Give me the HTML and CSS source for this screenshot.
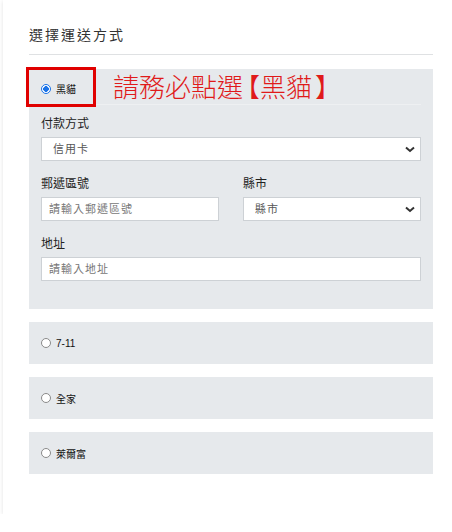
FILE: index.html
```html
<!DOCTYPE html>
<html lang="zh-TW">
<head>
    <meta charset="UTF-8">
    <meta name="viewport" content="width=device-width, initial-scale=1.0">
    <title>選擇運送方式</title>
    <link rel="stylesheet" href="styles.css">
</head>
<body>

    <div class="card">
        <h2 class="title">選擇運送方式</h2>
        <div class="divider"></div>

        <div class="shipping open">
            <div class="shipping-head">
                <label class="option">
                    <input type="radio" name="ship" checked>
                    <span>黑貓</span>
                </label>
                <span class="mark-box"></span>
                <span class="notice">請務必點選<span class="bracket open-b">【</span>黑貓<span class="bracket close-b">】</span></span>
            </div>

            <div class="field">
                <label>付款方式</label>
                <select>
                    <option>信用卡</option>
                </select>
            </div>

            <div class="field-row">
                <div class="field">
                    <label>郵遞區號</label>
                    <input type="text" placeholder="請輸入郵遞區號">
                </div>
                <div class="field">
                    <label>縣市</label>
                    <select>
                        <option>縣市</option>
                    </select>
                </div>
            </div>

            <div class="field">
                <label>地址</label>
                <input type="text" placeholder="請輸入地址">
            </div>
        </div>

        <div class="shipping">
            <label class="option">
                <input type="radio" name="ship">
                <span>7-11</span>
            </label>
        </div>

        <div class="shipping">
            <label class="option">
                <input type="radio" name="ship">
                <span>全家</span>
            </label>
        </div>

        <div class="shipping">
            <label class="option">
                <input type="radio" name="ship">
                <span>萊爾富</span>
            </label>
        </div>
    </div>

</body>
</html>
```

FILE: styles.css
```css
body {
    margin: 0;
    background: #fff;
    font-family: "Liberation Sans", "Noto Sans CJK TC", sans-serif;
    color: #222;
    overflow: hidden;
}
.card {
    margin-left: 3px;
    width: 404px;
    padding: 20px 19px 40px 26px;
    background: #fff;
    box-shadow: 0 1px 4px rgba(0, 0, 0, 0.12);
}
.title {
    margin: 0;
    font-size: 14px;
    font-weight: normal;
    letter-spacing: 2px;
    line-height: 30px;
    color: #333;
    height: 34px;
}
.divider {
    border-top: 1px solid #dfe1e3;
    margin-bottom: 14px;
}
.shipping {
    background: #e6e9ec;
    height: 42px;
    padding: 0 12px;
    margin-bottom: 13px;
    display: flex;
    align-items: center;
}
.shipping:last-child {
    margin-bottom: 0;
}
.shipping.open {
    height: auto;
    display: block;
    padding-bottom: 28px;
    margin-bottom: 13px;
}
.shipping-head {
    position: relative;
    height: 36px;
    display: flex;
    align-items: center;
    border-bottom: 1px solid #eef0f2;
    padding-top: 4px;
    box-sizing: border-box;
}
.option {
    display: flex;
    align-items: center;
    gap: 5px;
    font-size: 10px;
    color: #111;
}
.option input {
    appearance: none;
    width: 10px;
    height: 10px;
    margin: 0;
    border: 1px solid #8a8a8a;
    border-radius: 50%;
    background: #fff;
    box-sizing: border-box;
}
.option input:checked {
    border: 1px solid #1a73e8;
    background: radial-gradient(circle, #1a73e8 0 2.6px, #fff 3px);
}
.mark-box {
    position: absolute;
    left: -15px;
    top: -2px;
    width: 70px;
    height: 40px;
    border: 3px solid #e00000;
    box-sizing: border-box;
}
.notice {
    position: absolute;
    left: 72px;
    top: 1px;
    font-size: 26px;
    font-weight: 300;
    line-height: 32px;
    color: #e01a1a;
    font-family: "Noto Sans CJK TC", sans-serif;
    white-space: nowrap;
}
.notice .bracket {
    font-feature-settings: "halt";
}
.notice .open-b {
    margin-left: 4px;
}
.notice .close-b {
    margin-left: 3px;
}
.field {
    display: flex;
    flex-direction: column;
    margin-top: 14px;
}
.shipping-head + .field {
    margin-top: 10px;
}
.field label {
    font-size: 12px;
    line-height: 18px;
    margin-bottom: 4px;
    color: #222;
}
.field-row {
    display: grid;
    grid-template-columns: 1fr 1fr;
    gap: 24px;
}
select, input[type="text"] {
    height: 24px;
    border: 1px solid #cdd1d5;
    border-radius: 0;
    background: #fff;
    font-family: inherit;
    font-size: 11px;
    letter-spacing: 1px;
    color: #555;
    padding: 0 7px;
    box-sizing: border-box;
    outline: none;
}
select {
    appearance: none;
    padding-left: 11px;
    background-image: url("data:image/svg+xml,%3Csvg xmlns='http://www.w3.org/2000/svg' width='10' height='7' viewBox='0 0 10 7'%3E%3Cpath d='M1 1.5l4 3.5 4-3.5' fill='none' stroke='%23333' stroke-width='2'/%3E%3C/svg%3E");
    background-repeat: no-repeat;
    background-position: right 5px center;
}
input::placeholder {
    color: #777;
}
```
